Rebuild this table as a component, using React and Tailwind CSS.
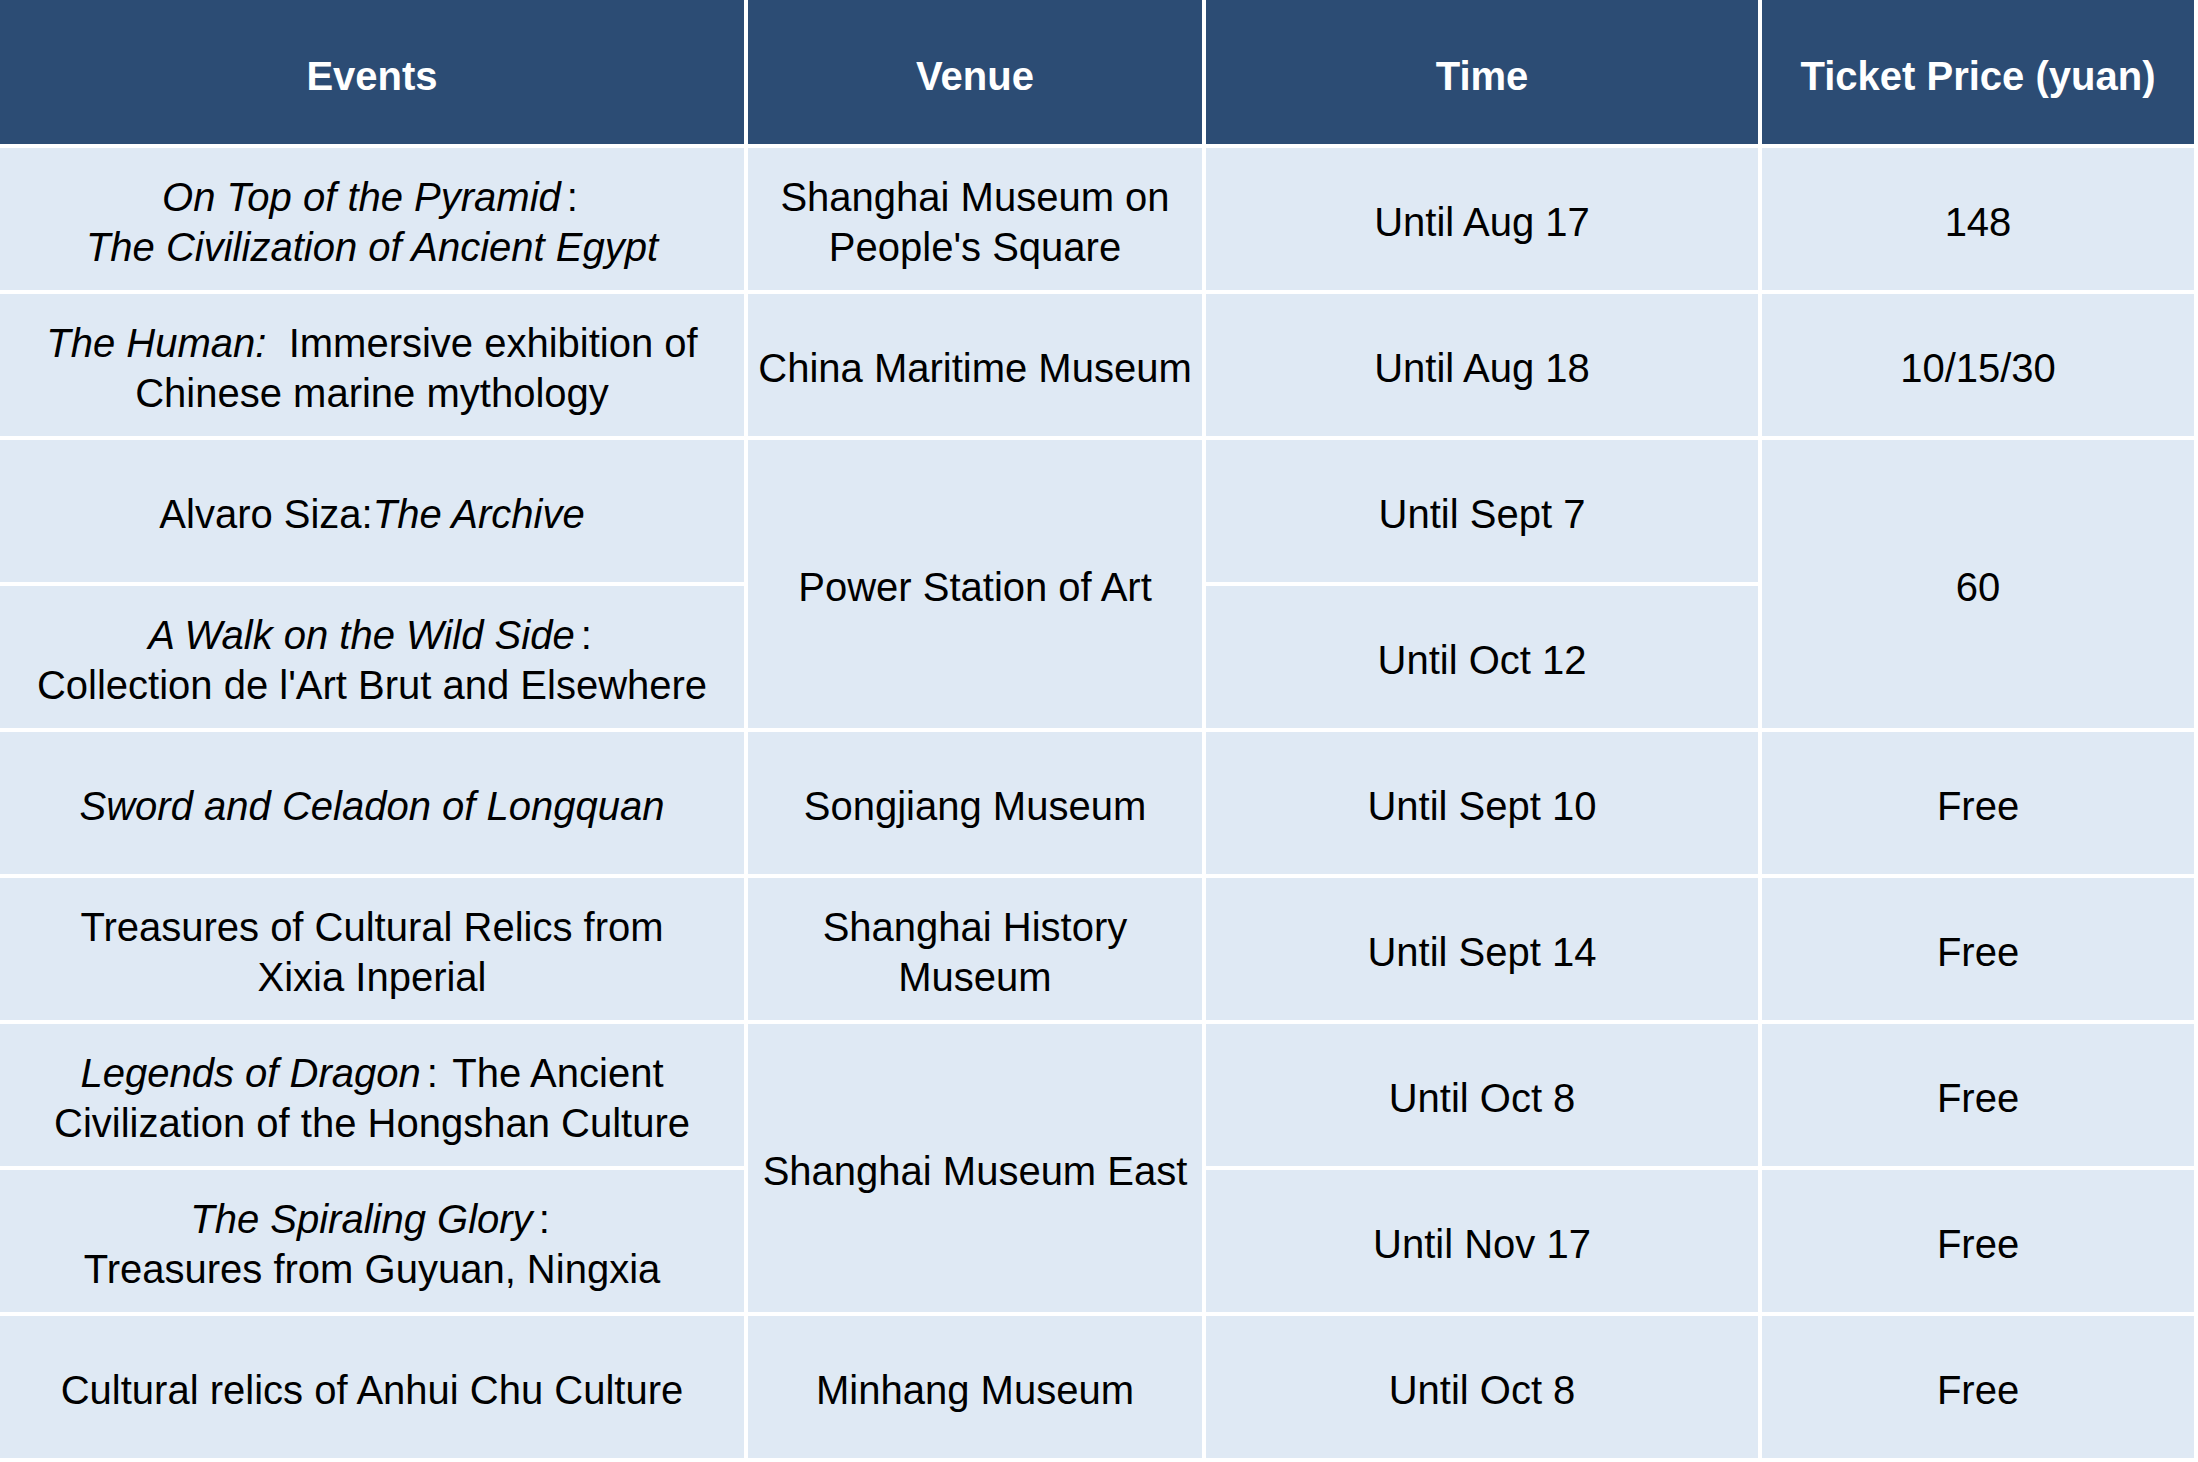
const head = ["Events", "Venue", "Time", "Ticket Price (yuan)"];

function Cell({ children, className = "" }) {
  return (
    <div
      className={
        "bg-[#dfe9f4] flex items-center justify-center pt-[5px] text-center text-black text-[40px] leading-[50px] " +
        className
      }
    >
      <div>{children}</div>
    </div>
  );
}

const I = ({ children }) => <i>{children}</i>;
// thin gap before the colon, like the source's full-width colon
const Colon = () => <span className="pl-[6px] pr-[4px]">:</span>;

export default function App() {
  return (
    <main className="w-[2198px] h-[1462px] bg-white pr-[4px] pb-[4px] font-['Liberation_Sans',Arial,sans-serif]">
      <div className="grid grid-cols-[744px_454px_552px_432px] grid-rows-[144px_repeat(9,142px)] gap-[4px]">
        {head.map((h) => (
          <div
            key={h}
            className="bg-[#2c4c74] text-white font-bold text-[40px] pt-[8px] flex items-center justify-center"
          >
            {h}
          </div>
        ))}

        {/* row 1 */}
        <Cell>
          <I>On Top of the Pyramid</I>
          <Colon />
          <br />
          <I>The Civilization of Ancient Egypt</I>
        </Cell>
        <Cell>
          Shanghai Museum on
          <br />
          People's Square
        </Cell>
        <Cell>Until Aug 17</Cell>
        <Cell>148</Cell>

        {/* row 2 */}
        <Cell>
          <I>The Human:</I>&nbsp; Immersive exhibition of
          <br />
          Chinese marine mythology
        </Cell>
        <Cell>China Maritime Museum</Cell>
        <Cell>Until Aug 18</Cell>
        <Cell>10/15/30</Cell>

        {/* rows 3-4 */}
        <Cell className="col-start-1 row-start-4">
          Alvaro Siza:<I>The Archive</I>
        </Cell>
        <Cell className="col-start-2 row-start-4 row-span-2">Power Station of Art</Cell>
        <Cell className="col-start-3 row-start-4">Until Sept 7</Cell>
        <Cell className="col-start-4 row-start-4 row-span-2">60</Cell>
        <Cell className="col-start-1 row-start-5">
          <I>A Walk on the Wild Side</I>
          <Colon />
          <br />
          Collection de l'Art Brut and Elsewhere
        </Cell>
        <Cell className="col-start-3 row-start-5">Until Oct 12</Cell>

        {/* row 5 */}
        <Cell className="col-start-1 row-start-6">
          <I>Sword and Celadon of Longquan</I>
        </Cell>
        <Cell className="col-start-2 row-start-6">Songjiang Museum</Cell>
        <Cell className="col-start-3 row-start-6">Until Sept 10</Cell>
        <Cell className="col-start-4 row-start-6">Free</Cell>

        {/* row 6 */}
        <Cell className="col-start-1 row-start-7">
          Treasures of Cultural Relics from
          <br />
          Xixia Inperial
        </Cell>
        <Cell className="col-start-2 row-start-7">
          Shanghai History
          <br />
          Museum
        </Cell>
        <Cell className="col-start-3 row-start-7">Until Sept 14</Cell>
        <Cell className="col-start-4 row-start-7">Free</Cell>

        {/* rows 7-8 */}
        <Cell className="col-start-1 row-start-8">
          <I>Legends of Dragon</I>
          <Colon /> The Ancient
          <br />
          Civilization of the Hongshan Culture
        </Cell>
        <Cell className="col-start-2 row-start-8 row-span-2">Shanghai Museum East</Cell>
        <Cell className="col-start-3 row-start-8">Until Oct 8</Cell>
        <Cell className="col-start-4 row-start-8">Free</Cell>
        <Cell className="col-start-1 row-start-9">
          <I>The Spiraling Glory</I>
          <Colon />
          <br />
          Treasures from Guyuan, Ningxia
        </Cell>
        <Cell className="col-start-3 row-start-9">Until Nov 17</Cell>
        <Cell className="col-start-4 row-start-9">Free</Cell>

        {/* row 9 */}
        <Cell className="col-start-1 row-start-10">Cultural relics of Anhui Chu Culture</Cell>
        <Cell className="col-start-2 row-start-10">Minhang Museum</Cell>
        <Cell className="col-start-3 row-start-10">Until Oct 8</Cell>
        <Cell className="col-start-4 row-start-10">Free</Cell>
      </div>
    </main>
  );
}
